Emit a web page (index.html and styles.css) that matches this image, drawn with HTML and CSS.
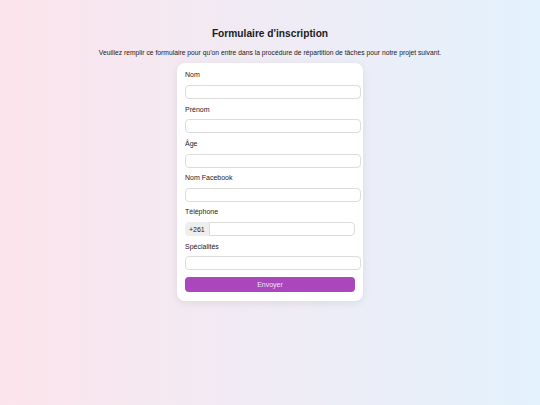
FILE: index.html
```html
<!DOCTYPE html>
<html lang="fr">
<head>
<meta charset="utf-8">
<title>Formulaire d'inscription</title>
<link rel="stylesheet" href="styles.css">
</head>
<body>
<main class="page">
  <h1 class="title">Formulaire d'inscription</h1>
  <p class="intro">Veuillez remplir ce formulaire pour qu'on entre dans la procédure de répartition de tâches pour notre projet suivant.</p>
  <form class="card">
    <label class="label">Nom</label>
    <input class="field" type="text">
    <label class="label">Prénom</label>
    <input class="field" type="text">
    <label class="label">Âge</label>
    <input class="field" type="text">
    <label class="label">Nom Facebook</label>
    <input class="field" type="text">
    <label class="label">Téléphone</label>
    <div class="phone">
      <span class="prefix">+261</span>
      <input class="phone-input" type="text">
    </div>
    <label class="label">Spécialités</label>
    <input class="field" type="text">
    <button class="submit" type="button">Envoyer</button>
  </form>
</main>
</body>
</html>
```
FILE: styles.css
```css
html, body {
  margin: 0;
  padding: 0;
  height: 100%;
}
body {
  font-family: "Liberation Sans", Arial, sans-serif;
  color: #1a1a1a;
  background: linear-gradient(to right, #fce4ec, #e3f2fd);
}
.page {
  display: flex;
  flex-direction: column;
  align-items: center;
  padding-top: 27px;
}
.title {
  margin: 0;
  font-size: 10.2px;
  line-height: 14px;
  font-weight: bold;
}
.intro {
  margin: 7px 0 0;
  font-size: 6.75px;
  line-height: 9px;
}
.card {
  margin-top: 6px;
  width: 170px;
  padding: 7.3px 8px 9px;
  background: #fff;
  border-radius: 8px;
  box-shadow: 0 2px 8px rgba(0, 0, 0, 0.08);
  display: flex;
  flex-direction: column;
}
.label {
  display: block;
  font-size: 7px;
  line-height: 9px;
  margin-bottom: 5.7px;
}
.field {
  display: block;
  width: 100%;
  height: 12px;
  padding: 0 2px;
  margin: 0 0 5.6px;
  border: 1px solid #dcdcdc;
  border-radius: 4px;
  background: #fff;
  font: inherit;
  font-size: 7px;
  box-sizing: content-box;
  flex: none;
}
.phone {
  display: flex;
  height: 14px;
  margin-bottom: 5.6px;
}
.prefix {
  display: flex;
  align-items: center;
  padding: 0 4px;
  font-size: 7px;
  background: #eeeeee;
  border-radius: 4px 0 0 4px;
  color: #222;
}
.phone-input {
  flex: 1;
  min-width: 0;
  margin: 0;
  padding: 0 2px;
  height: 14px;
  box-sizing: border-box;
  border: 1px solid #dcdcdc;
  border-radius: 0 4px 4px 0;
  background: #fff;
}
.submit {
  margin-top: 0.9px;
  height: 15px;
  padding: 0;
  border: none;
  border-radius: 4px;
  background: #ab47bc;
  color: #f3e0f5;
  font-family: inherit;
  font-size: 7px;
}
```
